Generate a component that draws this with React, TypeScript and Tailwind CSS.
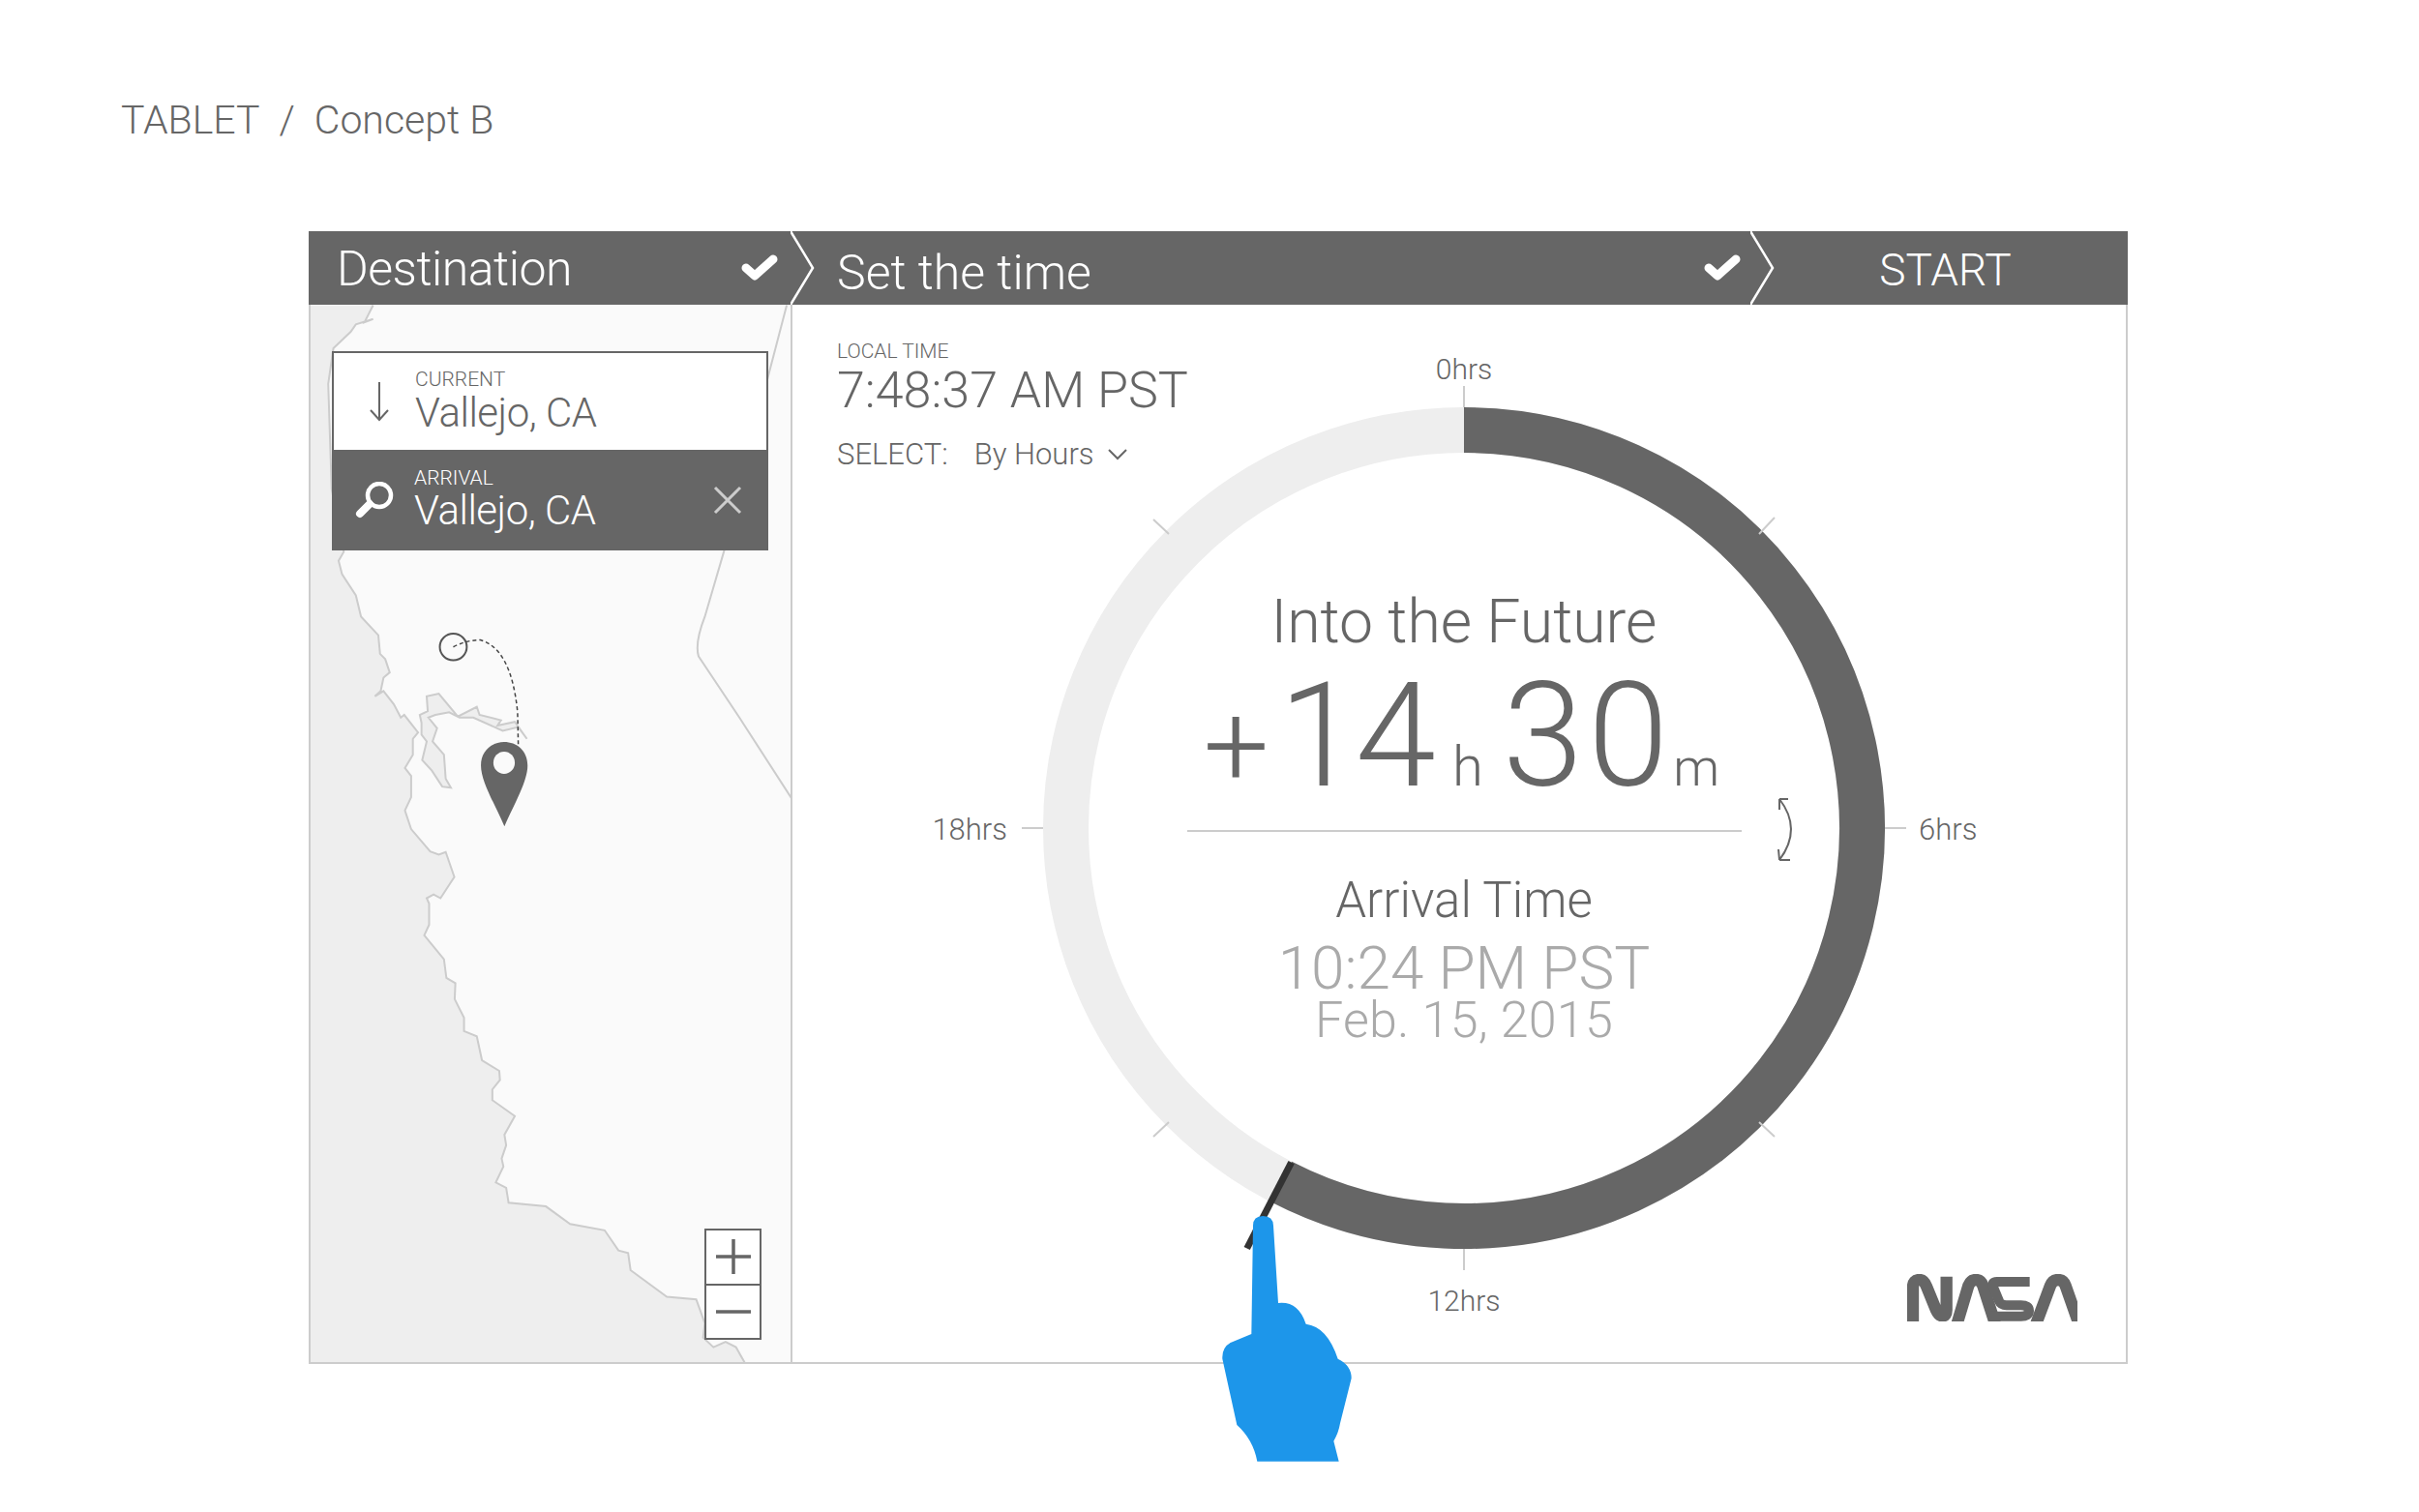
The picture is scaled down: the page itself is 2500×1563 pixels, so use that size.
import React from 'react';

// coastline traced from the map, in the map's own viewBox units
const coast =
    'M240 -446 L215 -414 L240 -420 L190 -410 L175 -396 L125 -365 L110 -298 L120 -100 L155 18 L140 35 L150 60 L190 100 L205 140 L255 175 L260 210 L275 220 L288 245 L270 255 L262 280 L245 290 L270 280 L300 305 L320 330 L330 325 L370 358 L355 370 L355 400 L332 425 L350 440 L350 480 L332 505 L350 540 L405 582 L430 588 L450 583 L475 630 L460 645 L435 670 L415 663 L395 670 L402 680 L402 720 L388 740 L445 785 L452 820 L478 830 L476 860 L503 895 L503 920 L540 930 L555 975 L605 995 L607 1012 L585 1030 L585 1050 L650 1080 L620 1115 L625 1135 L612 1160 L617 1175 L595 1205 L625 1215 L632 1243 L740 1250 L810 1283 L910 1295 L950 1333 L978 1338 L985 1370 L1090 1420 L1175 1425 L1200 1470 L1195 1497 L1225 1515 L1260 1505 L1290 1515 L1318 1547';

const bay =
    'M380 340 L375 325 L398 318 L395 290 L430 285 L485 328 L540 310 L548 325 L610 335 L600 345 L650 338 L685 370 L660 348 L615 355 L530 330 L490 330 L460 320 L420 325 L400 330 L425 350 L412 375 L445 400 L450 445 L465 462 L440 460 L410 430 L382 410 L395 375 L380 362 Z';

const Check: React.FC = () => (
    <svg className="w-[40px] h-[30px]" viewBox="0 0 40 30" fill="none">
        <path d="M6 15 L15 23 L34 6" stroke="#fff" strokeWidth="9" strokeLinecap="round" strokeLinejoin="round" />
    </svg>
);

const Chevron: React.FC = () => (
    <svg className="absolute top-0 left-full -ml-[1px] w-[26px] h-[76px] z-10" viewBox="0 0 26 76" fill="none">
        <path d="M0 0 L23 38 L0 76" stroke="#fff" strokeWidth="2.5" />
    </svg>
);

const MapPanel: React.FC = () => (
    <div className="relative w-[498px] shrink-0 h-full border-r-2 border-[#ccc] bg-[#fafafa]">
        <svg className="w-full h-full" viewBox="59 -447 1389 1990" preserveAspectRatio="none" fill="none">
            <path d={`${coast} L59 1547 L59 -446 Z`} fill="#eee" />
            <path d={coast} stroke="#ccc" strokeWidth="2" vectorEffect="non-scaling-stroke" />
            <path d={bay} fill="#eee" stroke="#ccc" strokeWidth="2" vectorEffect="non-scaling-stroke" />
            <path
                d="M1437 -446 L1380 -304 L1255 18 L1200 140 Q1170 190 1182 215 L1300 330 L1452 483"
                stroke="#ccc"
                strokeWidth="2"
                vectorEffect="non-scaling-stroke"
            />
            <ellipse cx="472" cy="197" rx="39" ry="25" stroke="#555" strokeWidth="2" fill="#fafafa" vectorEffect="non-scaling-stroke" />
            <path
                d="M472 197 Q510 184 550 184 Q640 200 658 320 L660 380"
                stroke="#444"
                strokeWidth="1.5"
                strokeDasharray="4 3"
                vectorEffect="non-scaling-stroke"
            />
            <path d="M620 535 C590 490 552 450 552 420 C552 392 585 376 619 376 C655 376 687 392 687 420 C687 450 650 490 620 535 Z" fill="#666" />
            <ellipse cx="619" cy="415" rx="31" ry="21" fill="#fafafa" />
        </svg>

        {/* search box */}
        <div className="absolute left-[22px] top-[48px] w-[451px]">
            <div className="h-[102px] bg-white border-2 border-b-0 border-[#666] flex items-center text-[#666]">
                <svg className="ml-[36px] w-[22px] h-[42px]" viewBox="0 0 22 42" fill="none">
                    <path d="M11 1 V40 M2 30 L11 40 L20 30" stroke="#666" strokeWidth="2" />
                </svg>
                <div className="ml-[26px] -mt-[1px]">
                    <div className="text-[21px] leading-[22px]">CURRENT</div>
                    <div className="text-[42px] leading-[44px] mt-[2px] -tracking-[0.5px]">Vallejo, CA</div>
                </div>
            </div>
            <div className="h-[104px] bg-[#666] flex items-center text-white">
                <svg className="ml-[24px] w-[42px] h-[38px]" viewBox="0 0 42 38" fill="none">
                    <circle cx="25" cy="14" r="12" stroke="#fff" strokeWidth="4.5" />
                    <path d="M15 23 L5 33" stroke="#fff" strokeWidth="8" strokeLinecap="round" />
                </svg>
                <div className="ml-[19px] -mt-[1px]">
                    <div className="text-[21px] leading-[22px]">ARRIVAL</div>
                    <div className="text-[42px] leading-[44px] mt-[1px] -tracking-[0.5px]">Vallejo, CA</div>
                </div>
                <svg className="ml-auto mr-[27px] w-[30px] h-[30px]" viewBox="0 0 30 30" fill="none">
                    <path d="M2 2 L28 28 M28 2 L2 28" stroke="#ccc" strokeWidth="3" />
                </svg>
            </div>
        </div>

        {/* zoom control */}
        <div className="absolute left-[407px] top-[955px] w-[59px] h-[115px] bg-white border-2 border-[#666] flex flex-col">
            <div className="flex-1 flex items-center justify-center border-b-2 border-[#666]">
                <svg className="w-[38px] h-[38px]" viewBox="0 0 38 38" fill="none">
                    <path d="M1 19 H37 M19 1 V37" stroke="#666" strokeWidth="3.5" />
                </svg>
            </div>
            <div className="flex-1 flex items-center justify-center">
                <svg className="w-[38px] h-[38px]" viewBox="0 0 38 38" fill="none">
                    <path d="M1 19 H37" stroke="#666" strokeWidth="3.5" />
                </svg>
            </div>
        </div>
    </div>
);

const Dial: React.FC = () => (
    <div className="relative col-start-2 row-start-2 w-[870px] h-[870px] grid">
        <svg className="col-start-1 row-start-1 w-[870px] h-[870px] overflow-visible" viewBox="0 0 870 870" fill="none">
            <circle cx="435" cy="435" r="411.5" stroke="#eee" strokeWidth="47" />
            <path d="M435 23.5 A411.5 411.5 0 1 1 246.3 800.7" stroke="#666" strokeWidth="47" />
            <path d="M256.6 780.7 L210.7 869.5" stroke="#333" strokeWidth="7" />
            <path
                d="M435 -22 V0 M435 870 V892 M-22 435 H0 M870 435 H892 M114 116 L130 131 M756 114 L740 131 M756 754 L740 739 M114 754 L130 739"
                stroke="#ccc"
                strokeWidth="2"
            />
            <path
                d="M761 405 Q785 436 761 468 M761 405 L770 405 M761 405 L761 416 M761 468 L760 457 M761 468 L772 468"
                stroke="#666"
                strokeWidth="2"
            />
        </svg>

        <div className="col-start-1 row-start-1 flex flex-col items-center pt-[187px] text-[#666]">
            <div className="text-[62.5px] leading-[70px]">Into the Future</div>
            <div className="flex items-baseline justify-center pr-[5px] h-[136px] leading-[136px] mt-[15px]">
                <span className="text-[120px] mr-[10px]">+</span>
                <span className="text-[150px] -tracking-[4px]">14</span>
                <span className="text-[58px] ml-[21px] mr-[20px]">h</span>
                <span className="text-[150px] tracking-[5px]">30</span>
                <span className="text-[54px]">m</span>
            </div>
            <div className="w-[573px] h-[2px] bg-[#ccc] mt-[29px]" />
            <div className="text-[51px] leading-[56px] mt-[43px]">Arrival Time</div>
            <div className="text-[62px] leading-[56px] mt-[14px] text-[#aaa]">10:24 PM PST</div>
            <div className="text-[52px] leading-[48px] mt-[2px] tracking-[0.2px] text-[#aaa]">Feb. 15, 2015</div>
        </div>

        {/* pointing hand */}
        <svg className="absolute left-[182px] top-[832px] w-[140px] h-[260px] z-10" viewBox="180 310 420 780">
            <path
                d="M285 352 Q285 322 316 322 Q347 322 348 352 L363 592 Q425 585 449 657 Q515 665 548 765 Q590 785 590 825 L555 965 Q550 995 535 1020 L551 1083 H298 Q285 1015 235 970 L190 765 Q188 730 215 715 L280 688 Z"
                fill="#1d96ea"
            />
        </svg>
    </div>
);

const NasaLogo: React.FC = () => (
    <svg className="w-[176px] h-[49px]" viewBox="212 110 528 147" fill="none">
        <g stroke="#666">
            <path strokeWidth="37" d="M230 270 V150 Q230 128 250 128 Q264 128 272 148 L302 222 Q310 240 322 240 Q334 240 334 222 V118" />
            <path strokeWidth="37" d="M362 280 L402 146 Q409 128 425 128 Q441 128 447 146 L490 280" />
            <path strokeWidth="30" d="M592 134 H490 Q472 134 479 150 L497 194 Q503 207 520 207 H565 Q590 207 590 224 Q590 241 565 241 H470" />
            <path strokeWidth="37" d="M606 280 L656 146 Q663 128 680 128 Q697 128 703 146 L750 280" />
        </g>
    </svg>
);

const App: React.FC = () => {
    return (
        <div className="w-[2500px] h-[1563px] bg-white overflow-hidden font-[Roboto,sans-serif] font-light text-[#666]">
            <div className="pl-[125px] pt-[100px] h-[239px] text-[41px] leading-[48px]">TABLET&nbsp; /&nbsp; Concept B</div>

            <div className="ml-[319px] w-[1880px] h-[1171px] flex flex-col">
                {/* step bar */}
                <div className="flex h-[76px] shrink-0 bg-[#666] text-white">
                    <div className="relative w-[499px] flex items-center pl-[29px] pr-[13px]">
                        <span className="text-[50px] leading-[76px] -tracking-[0.5px] mt-[2px]">Destination</span>
                        <span className="ml-auto"><Check /></span>
                        <Chevron />
                    </div>
                    <div className="relative w-[992px] flex items-center pl-[47px] pr-[10px]">
                        <span className="text-[50px] leading-[76px] mt-[9px]">Set the time</span>
                        <span className="ml-auto"><Check /></span>
                        <Chevron />
                    </div>
                    <div className="flex-1 flex items-center justify-center pl-[12px] pt-[5px] text-[46px]">START</div>
                </div>

                <div className="flex flex-1 min-h-0 border-x-2 border-b-2 border-[#ccc]">
                    <MapPanel />

                    <div className="flex-1 grid grid-cols-[259px_870px_1fr] grid-rows-[106px_870px_1fr] bg-white">
                        <div className="col-start-1 col-span-2 row-start-1 row-span-2 self-start justify-self-start pl-[46px] pt-[37px] z-10">
                            <div className="text-[21px] leading-[22px]">LOCAL TIME</div>
                            <div className="text-[52px] leading-[56px] mt-[2px]">7:48:37 AM PST</div>
                            <div className="flex items-center text-[31px] leading-[34px] mt-[21px]">
                                <span>SELECT:</span>
                                <span className="ml-[27px]">By Hours</span>
                                <svg className="ml-[13px] w-[22px] h-[14px]" viewBox="0 0 22 14" fill="none">
                                    <path d="M2 2 L11 11 L20 2" stroke="#666" strokeWidth="2" />
                                </svg>
                            </div>
                        </div>

                        <div className="col-start-2 row-start-1 justify-self-center self-end pb-[22px] text-[30px] leading-[34px]">0hrs</div>
                        <div className="col-start-1 row-start-2 justify-self-end self-center pr-[37px] pt-[3px] text-[31px] leading-[34px]">18hrs</div>
                        <Dial />
                        <div className="col-start-3 row-start-2 justify-self-start self-center pl-[35px] pt-[3px] text-[31px] leading-[34px]">6hrs</div>
                        <div className="col-start-2 row-start-3 justify-self-center self-start pt-[37px] text-[30px] leading-[34px]">12hrs</div>
                        <div className="col-start-3 row-start-3 justify-self-end self-start pt-[26px] pr-[50px]">
                            <NasaLogo />
                        </div>
                    </div>
                </div>
            </div>
        </div>
    );
};

export default App;
